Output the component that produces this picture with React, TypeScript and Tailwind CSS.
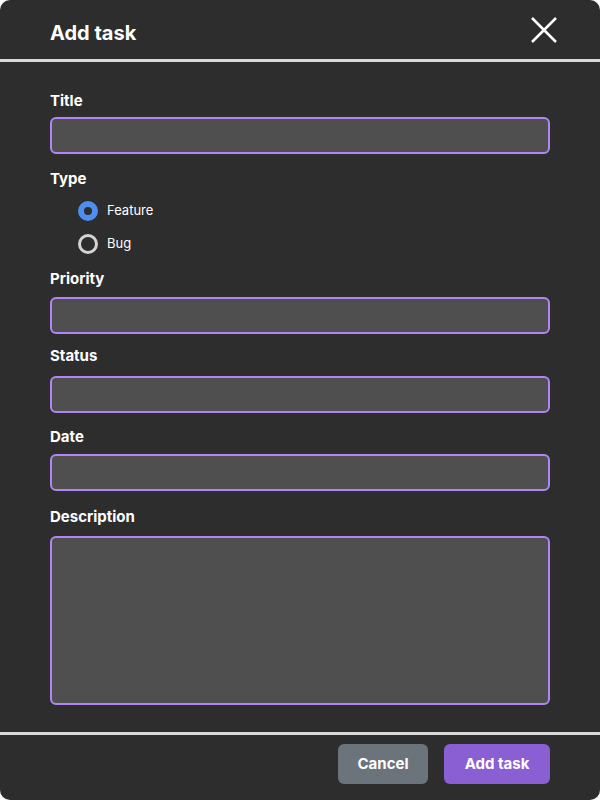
import React, { useState } from 'react';

const Field: React.FC<{ label: string; className?: string; gap?: string }> = ({ label, className, gap = 'mt-[6px]' }) => (
  <div className={className}>
    <label className="block text-[15px] font-bold text-white leading-5">{label}</label>
    <input
      type="text"
      className={`${gap} block w-full h-[37px] rounded-md border-2 border-[#b285f4] bg-[#4f4f4f] px-3 text-sm text-white outline-none`}
    />
  </div>
);

const Radio: React.FC<{ label: string; checked: boolean; onClick: () => void }> = ({ label, checked, onClick }) => (
  <button onClick={onClick} className="flex items-center gap-[9px] h-5 text-left">
    {checked ? (
      <span className="w-5 h-5 rounded-full border-[6px] border-[#4d8ef0] bg-[#2d2d2d]" />
    ) : (
      <span className="w-5 h-5 rounded-full border-[3px] border-[#d4d4d4] bg-[#2d2d2d]" />
    )}
    <span className="text-[13px] text-white">{label}</span>
  </button>
);

export default function App() {
  const [type, setType] = useState('feature');

  return (
    <div className="w-[600px] h-[800px] bg-[#2d2d2d] rounded-[10px] flex flex-col font-['Inter',sans-serif]">
      {/* Header */}
      <header className="h-[62px] px-[50px] flex items-center justify-between border-b-[3px] border-[#d9d9d9] shrink-0">
        <h2 className="mt-1.5 text-[20px] font-bold text-white">Add task</h2>
        <button className="w-7 h-7 -mr-2 flex items-center justify-center text-white">
          <svg width="28" height="28" viewBox="0 0 28 28" fill="none" stroke="currentColor" strokeWidth="2.5">
            <path d="M2 2 L26 26 M26 2 L2 26" />
          </svg>
        </button>
      </header>

      {/* Body */}
      <div className="flex-1 px-[50px] pt-[29px]">
        <Field label="Title" />

        <div className="mt-[15px]">
          <label className="block text-[15px] font-bold text-white leading-5">Type</label>
          <div className="mt-[12px] pl-7 flex flex-col gap-[13px]">
            <Radio label="Feature" checked={type === 'feature'} onClick={() => setType('feature')} />
            <Radio label="Bug" checked={type === 'bug'} onClick={() => setType('bug')} />
          </div>
        </div>

        <Field label="Priority" className="mt-[15px]" gap="mt-[8px]" />
        <Field label="Status" className="mt-[12px]" gap="mt-[10px]" />
        <Field label="Date" className="mt-[14px]" gap="mt-[7px]" />

        <div className="mt-[16px]">
          <label className="block text-[15px] font-bold text-white leading-5">Description</label>
          <textarea className="mt-[9px] block w-full h-[169px] rounded-md border-2 border-[#b285f4] bg-[#4f4f4f] px-3 py-2 text-sm text-white outline-none resize-none" />
        </div>
      </div>

      {/* Footer */}
      <footer className="h-[68px] border-t-[3px] border-[#d9d9d9] px-[50px] flex items-start justify-end gap-4 pt-[9px] shrink-0">
        <button className="h-10 w-[90px] rounded-md bg-[#6b737b] text-[15px] font-bold text-white">Cancel</button>
        <button className="h-10 w-[106px] rounded-md bg-[#8a5fd3] text-[15px] font-bold text-white">Add task</button>
      </footer>
    </div>
  );
}
